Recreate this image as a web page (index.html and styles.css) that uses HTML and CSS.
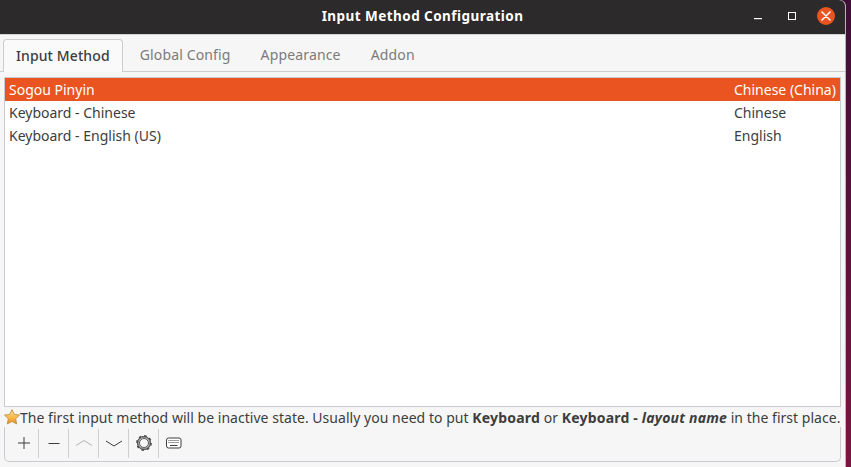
FILE: index.html
```html
<!DOCTYPE html>
<html lang="en">
<head>
<meta charset="utf-8">
<title>Input Method Configuration</title>
<link rel="stylesheet" href="styles.css">
</head>
<body>
<div class="window">
  <header class="titlebar">
    <span class="title">Input Method Configuration</span>
    <div class="controls">
      <svg width="10" height="10" viewBox="0 0 10 10"><rect x="1" y="7" width="8" height="1.2" fill="#fff"/></svg>
      <svg class="ctl-max" width="10" height="10" viewBox="0 0 10 10"><rect x="1.500" y="1.500" width="7" height="7" fill="none" stroke="#fff" stroke-width="1"/></svg>
      <span class="ctl-close"><svg width="10" height="10" viewBox="0 0 10 10"><path d="M1 1L9 9M9 1L1 9" stroke="#fff" stroke-width="1.500" stroke-linecap="round"/></svg></span>
    </div>
  </header>
  <nav class="tabs">
    <div class="tab active">Input Method</div>
    <div class="tab">Global Config</div>
    <div class="tab">Appearance</div>
    <div class="tab">Addon</div>
  </nav>
  <main class="body">
    <div class="list">
      <div class="row selected"><span>Sogou Pinyin</span><span class="lang">Chinese (China)</span></div>
      <div class="row"><span>Keyboard - Chinese</span><span class="lang">Chinese</span></div>
      <div class="row"><span>Keyboard - English (US)</span><span class="lang">English</span></div>
    </div>
    <div class="hint">
      <svg class="star" width="16" height="16" viewBox="0 0 16 16"><defs><linearGradient id="starfill" x1="0" y1="0" x2="0" y2="1"><stop offset="0" stop-color="#fde08a"/><stop offset=".55" stop-color="#f8b84a"/><stop offset="1" stop-color="#ee8f25"/></linearGradient></defs><path d="M8 .6l2.300 4.800 5.200.7-3.800 3.600.95 5.200L8 12.400l-4.650 2.500.95-5.200L.5 6.100l5.200-.7z" fill="url(#starfill)" stroke="#b98a3c" stroke-width=".8" stroke-linejoin="round"/></svg>
      <span class="hint-text">The first input method will be inactive state. Usually you need to put <b>Keyboard</b> or <b>Keyboard - <i>layout name</i></b> in the first place.</span>
    </div>
    <div class="toolbar">
      <div class="tool"><svg width="16" height="16" viewBox="0 0 16 16"><path d="M8 2v12M2 8h12" stroke="#3d3d3d" stroke-width="1"/></svg></div>
      <div class="tool"><svg width="16" height="16" viewBox="0 0 16 16"><path d="M2.500 8.500h11" stroke="#3d3d3d" stroke-width="1"/></svg></div>
      <div class="tool"><svg width="18" height="16" viewBox="0 0 18 16"><path d="M1 10.500L9 5.500l8 5" fill="none" stroke="#b4b4b4" stroke-width="1"/></svg></div>
      <div class="tool"><svg width="18" height="16" viewBox="0 0 18 16"><path d="M1 6l8 5 8-5" fill="none" stroke="#3d3d3d" stroke-width="1"/></svg></div>
      <div class="tool"><svg width="18" height="18" viewBox="0 0 18 18"><circle cx="9" cy="9" r="6" fill="#f6f6f6" stroke="#9a9a9a" stroke-width="2"/><circle cx="9" cy="9" r="7.200" fill="none" stroke="#4a4a4a" stroke-width="1.400" stroke-dasharray="2.600 3.050"/><circle cx="9" cy="9" r="6.500" fill="none" stroke="#4a4a4a" stroke-width=".9"/><circle cx="9" cy="9" r="4.500" fill="none" stroke="#4a4a4a" stroke-width=".9"/></svg></div>
      <div class="tool"><svg width="16" height="12" viewBox="0 0 16 12"><rect x=".5" y="1" width="14.500" height="10" rx="2" fill="#fff" stroke="#3d3d3d"/><path d="M2.500 3.500h10.500M2.500 5.500h10.500" stroke="#3d3d3d" stroke-dasharray="1 1"/><path d="M4 8.500h7.500" stroke="#3d3d3d"/></svg></div>
    </div>
  </main>
</div>
</body>
</html>
```
FILE: styles.css
```css
* { box-sizing: border-box; }
html, body { margin: 0; height: 100%; }
body {
  background: linear-gradient(180deg, #3f0e38 0%, #7a1540 100%);
  font-family: "Noto Sans", sans-serif;
  font-size: 14px;
  color: #3d3d3d;
  overflow: hidden;
}
.window {
  width: 845px;
  height: 467px;
  background: #f6f6f6;
  border-radius: 0 6px 0 0;
  box-shadow: 1px 0 0 #b9b4b8;
  display: flex;
  flex-direction: column;
}
.titlebar {
  height: 35px;
  flex: none;
  background: #2c2a2a;
  border-bottom: 1px solid #cfd3d6;
  border-radius: 0 6px 0 0;
  padding-bottom: 2px;
  position: relative;
  display: flex;
  align-items: center;
  justify-content: center;
  color: #fff;
}
.title { font-weight: 700; font-size: 13.5px; letter-spacing: .45px; }
.controls {
  position: absolute;
  right: 10px;
  top: 7px;
  display: flex;
  align-items: center;
  gap: 24px;
}
.ctl-max { margin-right: -4px; }
.ctl-close {
  width: 18px; height: 18px;
  border-radius: 50%;
  background: #e95420;
  display: flex; align-items: center; justify-content: center;
}
.tabs {
  height: 37px;
  flex: none;
  display: flex;
  padding: 4px 0 0 3px;
  border-bottom: 1px solid #cdcdcd;
}
.tab {
  padding: 0 13px;
  margin-right: 4px;
  line-height: 31px;
  color: #7b7b7b;
  font-size: 14px;
  letter-spacing: .15px;
}
.tab.active {
  color: #3d3d3d;
  background: #fafafa;
  border: 1px solid #cdcdcd;
  border-bottom: none;
  border-radius: 4px 4px 0 0;
  height: 33px;
  padding: 0 12px;
  font-weight: 500;
  letter-spacing: .1px;
}
.body {
  flex: 1;
  padding: 5px 4px;
  display: flex;
  flex-direction: column;
  min-height: 0;
}
.list {
  height: 330px;
  flex: none;
  background: #fff;
  border: 1px solid #c8ccd0;
}
.row {
  height: 23px;
  display: flex;
  align-items: center;
  justify-content: space-between;
  padding: 0 4px;
  color: #3d3d3d;
}
.row.selected { background: #e95420; color: #fff; }
.lang { width: 102px; flex: none; }
.hint {
  height: 20px;
  flex: none;
  display: flex;
  align-items: center;
  white-space: nowrap;
}
.star { flex: none; }
.hint-text { letter-spacing: .03px; }
.hint-text b { letter-spacing: .2px; }
.toolbar {
  flex: 1;
  display: flex;
  align-items: center;
  border: 1px solid #c8ccd0;
  border-top: none;
  border-radius: 0 0 5px 5px;
  padding: 0 0 2px 4px;
}
.tool {
  width: 30px;
  height: 29px;
  display: flex;
  align-items: center;
  justify-content: center;
  border-right: 1px solid #cdd0d3;
}
.tool:last-child { border-right-color: transparent; }
```
